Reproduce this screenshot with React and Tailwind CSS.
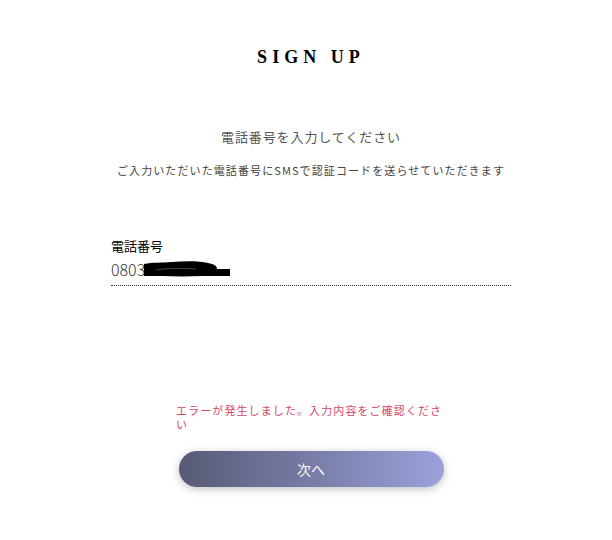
import React from 'react';

const jp = { fontFamily: '"Noto Sans CJK JP", "Noto Sans", sans-serif' };

const Redaction = () => (
    <svg width="88" height="16" viewBox="0 0 88 16" className="-ml-[3px]">
        <path d="M2 3 C10 1 20 2 30 1 C44 0 58 0 66 2 C72 3 75 5 75 8 L88 8 L88 15 L60 15 C40 16 20 15 2 15 Z" fill="#000" />
        <path d="M14 9 C26 7 40 7 54 8" stroke="#555" strokeWidth="0.8" fill="none" />
    </svg>
);

const App = () => {
    return (
        <div className="w-[612px] h-[540px] bg-white flex flex-col items-center pl-[10px]" style={jp}>
            <h1
                className="mt-[48px] text-[18px] font-bold tracking-[0.28em] text-black leading-none"
                style={{ fontFamily: '"Liberation Serif", serif' }}
            >
                SIGN UP
            </h1>

            <p className="mt-[64px] text-[13px] text-[#555] leading-none tracking-[0.07em]">電話番号を入力してください</p>
            <p className="mt-[22px] text-[11px] text-[#444] leading-none tracking-[0.1em]">
                ご入力いただいた電話番号にSMSで認証コードを送らせていただきます
            </p>

            <div className="mt-[63px] w-[400px]">
                <label className="block text-[13px] text-black leading-none">電話番号</label>
                <div className="mt-[9px] flex items-center pb-[8px] border-b border-dotted border-[#333]">
                    <span className="text-[16px] font-light text-[#333] leading-[16px]">0803</span>
                    <Redaction />
                </div>
            </div>

            <p className="mt-[117px] w-[270px] text-[11px] text-[#d4476a] leading-[14px] tracking-[0.1em]">
                エラーが発生しました。入力内容をご確認ください
            </p>

            <button className="mt-[20px] w-[265px] h-[36px] rounded-full bg-gradient-to-r from-[#575a75] to-[#9ca1dc] text-white text-[14px] shadow-[0_2px_8px_rgba(0,0,0,0.25)]">
                次へ
            </button>
        </div>
    );
};

export default App;
